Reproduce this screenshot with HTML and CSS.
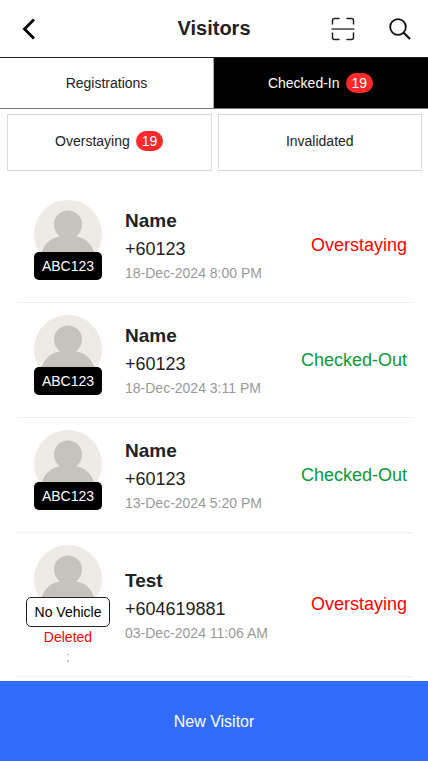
FILE: index.html
```html
<!DOCTYPE html>
<html lang="en">
<head>
<meta charset="utf-8">
<meta name="viewport" content="width=device-width, initial-scale=1">
<title>Visitors</title>
<link rel="stylesheet" href="styles.css">
</head>
<body>
<svg class="defs" width="0" height="0" aria-hidden="true">
  <symbol id="person" viewBox="0 0 68 68">
    <circle cx="34" cy="34" r="34" fill="#eeebe6"/>
    <path d="M7 55C10 43 18 37 26 36.500C22 33.500 20 29 20 24.500a14 14 0 0 1 28 0C48 29 46 33.500 42 36.500C50 37 58 43 61 55A34 34 0 0 1 7 55Z" fill="#c6c3bc"/>
  </symbol>
</svg>
<header class="topbar">
  <button class="icon-button" type="button" aria-label="Back">
    <svg width="28" height="28" viewBox="0 0 28 28" fill="none" stroke="#000" stroke-width="2.800"><path d="M20 4.500 10.500 14 20 23.500"/></svg>
  </button>
  <h1 class="title">Visitors</h1>
  <div class="actions">
    <button class="icon-button" type="button" aria-label="Scan">
      <svg width="28" height="28" viewBox="0 0 28 28" fill="none" stroke="#222" stroke-width="1.500" stroke-linecap="round"><path d="M4.500 9V5.500a2 2 0 0 1 2-2H11M19 3.500h4.500a2 2 0 0 1 2 2V9M25.500 18v4.500a2 2 0 0 1-2 2H19M11 24.500H6.500a2 2 0 0 1-2-2V18"/><path d="M4 14h22" stroke="#444"/></svg>
    </button>
    <button class="icon-button" type="button" aria-label="Search">
      <svg width="28" height="28" viewBox="0 0 28 28" fill="none" stroke="#111" stroke-width="1.800"><circle cx="12" cy="12" r="7.800"/><path d="m17.500 17.500 6.500 6.500" stroke-width="2.200"/></svg>
    </button>
  </div>
</header>
<nav class="tabs">
  <button class="tab" type="button">Registrations</button>
  <button class="tab active" type="button">Checked-In <span class="count">19</span></button>
</nav>
<div class="filters">
  <button class="filter" type="button">Overstaying <span class="count">19</span></button>
  <button class="filter" type="button">Invalidated</button>
</div>
<main>
  <ul class="visitors">
    <li class="visitor">
      <div class="badge">
        <svg class="avatar" width="68" height="68" aria-hidden="true"><use href="#person"/></svg>
        <span class="plate">ABC123</span>
      </div>
      <div class="info"><h2 class="name">Name</h2><p class="phone">+60123</p><p class="date">18-Dec-2024 8:00 PM</p></div>
      <span class="status overstaying">Overstaying</span>
    </li>
    <li class="visitor">
      <div class="badge">
        <svg class="avatar" width="68" height="68" aria-hidden="true"><use href="#person"/></svg>
        <span class="plate">ABC123</span>
      </div>
      <div class="info"><h2 class="name">Name</h2><p class="phone">+60123</p><p class="date">18-Dec-2024 3:11 PM</p></div>
      <span class="status checked-out">Checked-Out</span>
    </li>
    <li class="visitor">
      <div class="badge">
        <svg class="avatar" width="68" height="68" aria-hidden="true"><use href="#person"/></svg>
        <span class="plate">ABC123</span>
      </div>
      <div class="info"><h2 class="name">Name</h2><p class="phone">+60123</p><p class="date">13-Dec-2024 5:20 PM</p></div>
      <span class="status checked-out">Checked-Out</span>
    </li>
    <li class="visitor">
      <div class="badge">
        <svg class="avatar" width="68" height="68" aria-hidden="true"><use href="#person"/></svg>
        <span class="plate empty">No Vehicle</span>
        <span class="deleted">Deleted</span>
        <span class="note">;</span>
      </div>
      <div class="info"><h2 class="name">Test</h2><p class="phone">+604619881</p><p class="date">03-Dec-2024 11:06 AM</p></div>
      <span class="status overstaying">Overstaying</span>
    </li>
  </ul>
</main>
<button class="new-visitor" type="button">New Visitor</button>
</body>
</html>
```
FILE: styles.css
```css
* {
  box-sizing: border-box;
}

body {
  display: flex;
  flex-direction: column;
  min-height: 100vh;
  margin: 0;
  background: #fff;
  color: #222;
  font-family: "Liberation Sans", Arial, sans-serif;
  font-size: 14px;
}

button {
  border: 0;
  padding: 0;
  background: none;
  color: inherit;
  font: inherit;
  cursor: pointer;
}

h1, h2, p, ul {
  margin: 0;
  padding: 0;
}

.defs {
  position: absolute;
}

.topbar {
  display: grid;
  grid-template-columns: 1fr auto 1fr;
  align-items: center;
  height: 58px;
  padding: 0 14px;
  border-bottom: 1px solid #222;
}

.icon-button {
  display: flex;
  width: 28px;
  height: 28px;
}

.title {
  padding-bottom: 2px;
  font-size: 20px;
  line-height: 24px;
}

.actions {
  display: flex;
  justify-content: flex-end;
  gap: 30px;
}

.tabs {
  display: grid;
  grid-template-columns: 1fr 1fr;
  height: 51px;
  border-bottom: 1px solid #777;
}

.tab {
  display: flex;
  justify-content: center;
  align-items: center;
  gap: 6px;
  border-right: 1px solid #aaa;
}

.tab.active {
  border-color: #000;
  background: #000;
  color: #fff;
}

.count {
  padding: 0 6px;
  border-radius: 10px;
  background: #ff292c;
  color: #fff;
  line-height: 20px;
}

.filters {
  display: grid;
  grid-template-columns: 1fr 1fr;
  gap: 6px;
  padding: 5px 6px 17px 7px;
}

.filter {
  display: flex;
  justify-content: center;
  align-items: center;
  gap: 6px;
  height: 57px;
  padding-bottom: 4px;
  border: 1px solid #d9d9d9;
}

.visitors {
  margin: 0 16px 0 17px;
  list-style: none;
}

.visitor {
  display: flex;
  align-items: center;
  min-height: 115px;
  padding-right: 5px;
  border-bottom: 1px solid #eee;
}

.badge {
  display: flex;
  flex: 0 0 102px;
  flex-direction: column;
  align-self: flex-start;
  align-items: center;
  padding: 12px 0 9px;
}

.avatar {
  display: block;
}

.plate {
  z-index: 1;
  margin-top: -16px;
  padding: 0 8px;
  border-radius: 5px;
  background: #000;
  color: #fff;
  line-height: 28px;
}

.plate.empty {
  border: 1px solid #222;
  background: #fff;
  color: #000;
}

.deleted {
  color: #f00;
  line-height: 20px;
}

.note {
  color: #999;
  font-size: 12px;
  line-height: 20px;
}

.info {
  flex: 1;
  padding-left: 6px;
}

.name {
  font-size: 19px;
  line-height: 28px;
}

.phone {
  font-size: 18px;
  line-height: 28px;
}

.date {
  color: #999;
  line-height: 20px;
}

.status {
  font-size: 18px;
}

.overstaying {
  color: #f00;
}

.checked-out {
  color: #0b9a38;
}

.new-visitor {
  position: sticky;
  bottom: 0;
  z-index: 2;
  flex: none;
  height: 80px;
  margin-top: auto;
  padding-top: 2px;
  background: #326cff;
  color: #fff;
  font-size: 16px;
}
```
